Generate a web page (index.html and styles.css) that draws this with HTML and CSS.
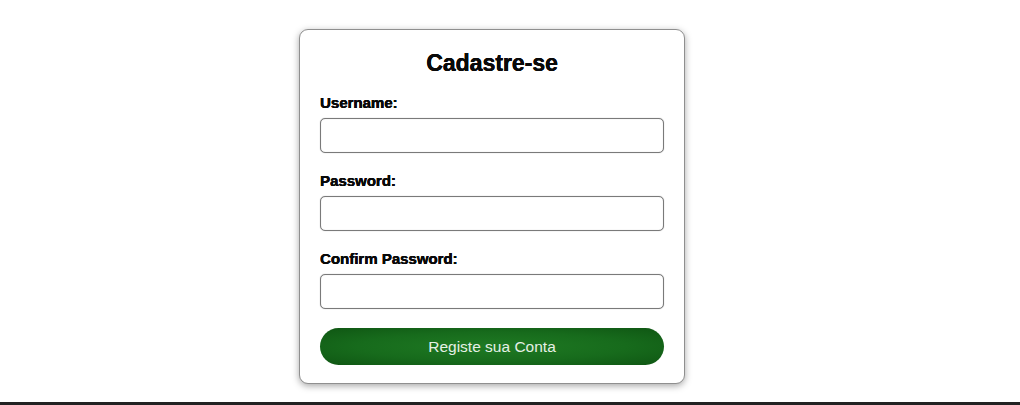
FILE: index.html
```html
<!DOCTYPE html>
<html lang="pt">
<head>
<meta charset="utf-8">
<title>Cadastre-se</title>
<link rel="stylesheet" href="styles.css">
</head>
<body>
<main class="page">
  <form class="card">
    <h2 class="title">Cadastre-se</h2>
    <label class="label" for="u">Username:</label>
    <input class="field" id="u" type="text">
    <label class="label" for="p">Password:</label>
    <input class="field" id="p" type="password">
    <label class="label" for="c">Confirm Password:</label>
    <input class="field" id="c" type="password">
    <button class="btn" type="button">Registe sua Conta</button>
  </form>
</main>
<footer class="bar"></footer>
</body>
</html>
```
FILE: styles.css
```css
html, body {
  margin: 0;
  padding: 0;
  background: #fff;
  font-family: "Liberation Sans", Arial, sans-serif;
  color: #111;
}
.page {
  height: 402px;
  box-sizing: border-box;
  padding-top: 29px;
  padding-right: 36px;
  display: flex;
  justify-content: center;
  align-items: flex-start;
}
.card {
  width: 386px;
  box-sizing: border-box;
  border: 1px solid #8f8f8f;
  border-radius: 9px;
  box-shadow: 0 2px 7px rgba(0,0,0,0.35);
  padding: 19px 20px 18px;
  display: flex;
  flex-direction: column;
  background: #fff;
}
.title {
  margin: 0 0 17px;
  font-size: 23px;
  line-height: 28px;
  font-weight: bold;
  text-align: center;
  color: #0a0a0a;
  text-shadow: 0 0 0.6px #000, 0.3px 0 0 #000;
}
.label {
  display: block;
  font-size: 15px;
  line-height: 18px;
  font-weight: bold;
  margin-bottom: 6px;
  color: #0a0a0a;
  text-shadow: 0 0 0.6px #000, 0.3px 0 0 #000;
}
.field {
  display: block;
  height: 35px;
  box-sizing: border-box;
  border: 1px solid #7a7a7a;
  border-radius: 5px;
  margin: 0 0 19px;
  padding: 0 8px;
  font-size: 15px;
  font-family: inherit;
  background: #fff;
  box-shadow: 0 0 1px rgba(0,0,0,0.35), inset 0 0 1px rgba(0,0,0,0.25);
}
.btn {
  margin: 0;
  height: 37px;
  border: none;
  border-radius: 19px;
  background: radial-gradient(ellipse at center, #1f7a23 0%, #176b1c 55%, #0f5613 100%);
  color: #e6f0e6;
  font-family: inherit;
  font-size: 15.5px;
  cursor: pointer;
}
.bar {
  height: 3px;
  background: #222;
}
```
